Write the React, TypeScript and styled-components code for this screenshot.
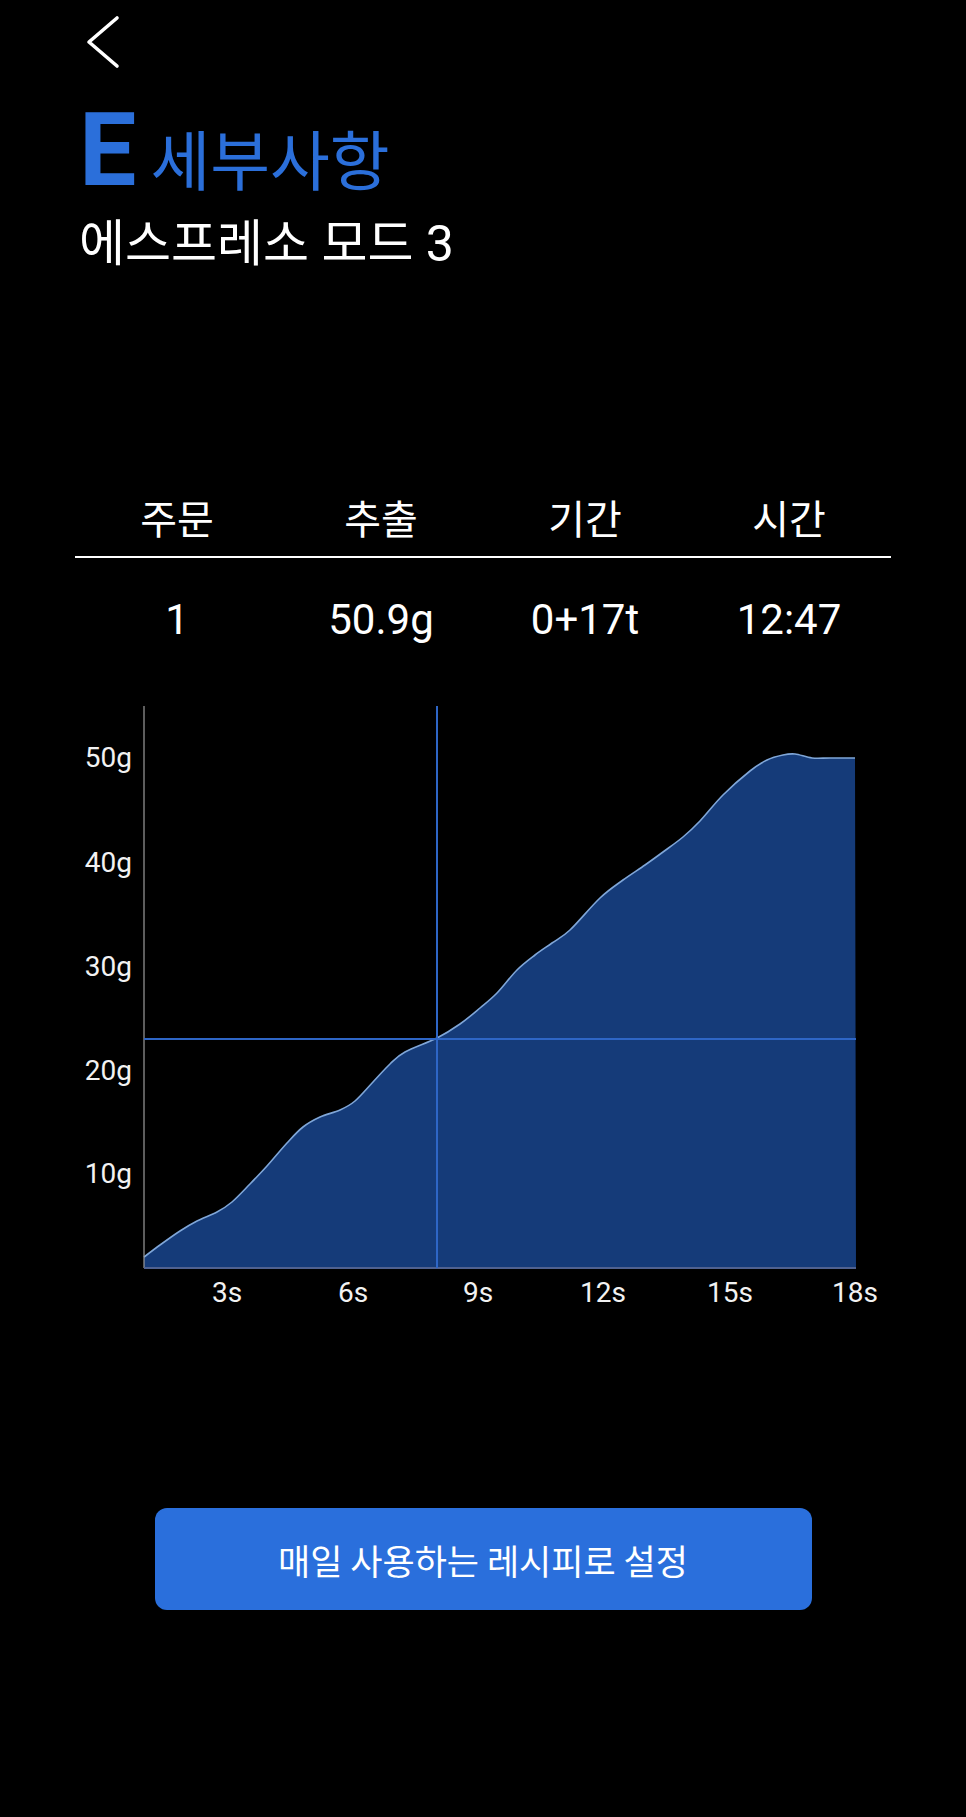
import React from 'react';
import styled, { createGlobalStyle } from 'styled-components';

const GlobalStyle = createGlobalStyle`
    html, body {
        margin: 0;
        padding: 0;
        background: #000;
    }
    body {
        font-family: Roboto, "Noto Sans CJK KR", sans-serif;
        color: #fff;
    }
`;

const Page = styled.div`
    width: 966px;
    min-height: 1817px;
    background: #000;
    display: flex;
    flex-direction: column;
`;

const Header = styled.header`
    display: flex;
    flex-direction: column;
    padding: 15px 0 0 79px;
`;

const BackButton = styled.button`
    display: flex;
    width: 34px;
    height: 54px;
    margin-left: 7px;
    padding: 0;
    border: 0;
    background: none;
    cursor: pointer;
`;

const TitleRow = styled.div`
    display: flex;
    align-items: baseline;
    gap: 14px;
    margin-top: 30px;
    color: #2b6fda;
    line-height: 1;
`;

const TitleLetter = styled.span`
    font-family: Roboto, sans-serif;
    font-weight: 700;
    font-size: 102px;
`;

const TitleText = styled.span`
    font-family: "Noto Sans CJK KR", sans-serif;
    font-size: 65px;
`;

const Subtitle = styled.div`
    margin-top: 18px;
    font-size: 50px;
    line-height: 1;
`;

const Stats = styled.section`
    width: 816px;
    margin: 230px 0 0 75px;
`;

const StatsRow = styled.div<{ $size: number; $line: number }>`
    display: grid;
    grid-template-columns: repeat(4, 1fr);
    text-align: center;
    font-size: ${(p) => p.$size}px;
    line-height: ${(p) => p.$line}px;
`;

const Divider = styled.div`
    height: 2px;
    margin: 13px 0 38px;
    background: #fff;
`;

const Chart = styled.svg`
    display: block;
    margin-top: 46px;
`;

const AxisLabel = styled.text`
    font-family: Roboto, sans-serif;
    font-size: 28px;
    fill: #f2f2f2;
`;

const PrimaryButton = styled.button`
    align-self: center;
    width: 657px;
    height: 102px;
    margin-top: 178px;
    border: 0;
    border-radius: 12px;
    background: #2a6fdc;
    color: #fff;
    font-family: "Noto Sans CJK KR", sans-serif;
    font-size: 35px;
    cursor: pointer;
`;

const stats = [
    { label: '주문', value: '1' },
    { label: '추출', value: '50.9g' },
    { label: '기간', value: '0+17t' },
    { label: '시간', value: '12:47' },
];

// page coordinates of the extraction curve (x: time, y: weight)
const curve: [number, number][] = [
    [144, 1257], [160, 1245], [180, 1231], [197, 1221], [217, 1212],
    [232, 1202], [250, 1184], [267, 1166], [287, 1143], [303, 1127],
    [320, 1117], [340, 1110], [355, 1101], [373, 1082], [390, 1064],
    [405, 1052], [437, 1038], [460, 1024], [480, 1008], [497, 993],
    [517, 970], [535, 955], [552, 943], [570, 930], [600, 898],
    [623, 880], [645, 865], [663, 852], [683, 837], [700, 821],
    [723, 795], [750, 771], [767, 760], [783, 755], [795, 754],
    [812, 758], [830, 758], [855, 758],
];

const smoothPath = (pts: [number, number][]) => {
    let d = `M ${pts[0][0]} ${pts[0][1]}`;
    for (let i = 0; i < pts.length - 1; i++) {
        const p0 = pts[i - 1] || pts[i];
        const p1 = pts[i];
        const p2 = pts[i + 1];
        const p3 = pts[i + 2] || p2;
        const c1x = p1[0] + (p2[0] - p0[0]) / 6;
        const c1y = p1[1] + (p2[1] - p0[1]) / 6;
        const c2x = p2[0] - (p3[0] - p1[0]) / 6;
        const c2y = p2[1] - (p3[1] - p1[1]) / 6;
        d += ` C ${c1x} ${c1y} ${c2x} ${c2y} ${p2[0]} ${p2[1]}`;
    }
    return d;
};

const CHART_TOP = 690;
const LEFT = 144;
const RIGHT = 856;
const TOP = 706;
const BOTTOM = 1268;

const yTicks = [
    { label: '50g', y: 757 },
    { label: '40g', y: 862 },
    { label: '30g', y: 966 },
    { label: '20g', y: 1070 },
    { label: '10g', y: 1173 },
];

const xTicks = [
    { label: '3s', x: 227 },
    { label: '6s', x: 353 },
    { label: '9s', x: 478 },
    { label: '12s', x: 603 },
    { label: '15s', x: 730 },
    { label: '18s', x: 855 },
];

const ExtractionChart = () => {
    const line = smoothPath(curve);
    const area = `${line} L ${RIGHT} ${BOTTOM} L ${LEFT} ${BOTTOM} Z`;
    return (
        <Chart
            width={966}
            height={640}
            viewBox={`0 ${CHART_TOP} 966 640`}
        >
            <path d={area} fill="#153b79" />
            <path d={line} fill="none" stroke="#7fa6d8" strokeWidth={1.6} />
            <line x1={LEFT} y1={TOP} x2={LEFT} y2={BOTTOM} stroke="#9c9c9c" strokeWidth={1.2} />
            <line x1={LEFT} y1={BOTTOM} x2={RIGHT} y2={BOTTOM} stroke="#4f6190" strokeWidth={2} />
            <line x1={437} y1={TOP} x2={437} y2={BOTTOM} stroke="#2e66c6" strokeWidth={2} />
            <line x1={LEFT} y1={1039} x2={RIGHT} y2={1039} stroke="#2e66c6" strokeWidth={2} />
            {yTicks.map((t) => (
                <AxisLabel key={t.label} x={132} y={t.y} textAnchor="end" dominantBaseline="central">
                    {t.label}
                </AxisLabel>
            ))}
            {xTicks.map((t) => (
                <AxisLabel key={t.label} x={t.x} y={1292} textAnchor="middle" dominantBaseline="central">
                    {t.label}
                </AxisLabel>
            ))}
        </Chart>
    );
};

export default function App() {
    return (
        <Page>
            <GlobalStyle />
            <Header>
                <BackButton aria-label="뒤로">
                    <svg width="34" height="54" viewBox="0 0 34 54">
                        <path
                            d="M 31 3 L 3 27 L 31 51"
                            fill="none"
                            stroke="#fff"
                            strokeWidth={3.6}
                            strokeLinecap="round"
                            strokeLinejoin="round"
                        />
                    </svg>
                </BackButton>
                <TitleRow>
                    <TitleLetter>E</TitleLetter>
                    <TitleText>세부사항</TitleText>
                </TitleRow>
                <Subtitle>에스프레소 모드 3</Subtitle>
            </Header>

            <Stats>
                <StatsRow $size={40} $line={44}>
                    {stats.map((s) => (
                        <div key={s.label}>{s.label}</div>
                    ))}
                </StatsRow>
                <Divider />
                <StatsRow $size={42} $line={48}>
                    {stats.map((s) => (
                        <div key={s.label}>{s.value}</div>
                    ))}
                </StatsRow>
            </Stats>

            <ExtractionChart />

            <PrimaryButton>매일 사용하는 레시피로 설정</PrimaryButton>
        </Page>
    );
}
